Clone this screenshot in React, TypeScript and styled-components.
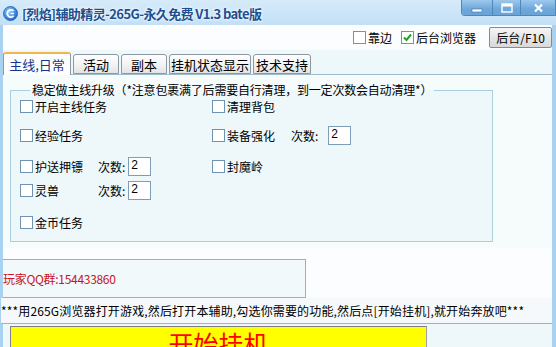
import React from 'react';
import styled, { createGlobalStyle } from 'styled-components';

const GlobalStyle = createGlobalStyle`
  html, body {
    margin: 0;
    padding: 0;
    background: #ffffff;
  }
  body {
    font-family: "Noto Sans CJK SC", "Noto Sans", sans-serif;
    font-size: 12px;
    color: #000;
  }
`;

// Ventana
const Window = styled.div`
  width: 556px;
  height: 347px;
  overflow: hidden;
  display: flex;
  flex-direction: column;
  background: #c4e0f6;
`;

const TitleBar = styled.div`
  height: 25px;
  flex-shrink: 0;
  display: flex;
  align-items: flex-start;
  background: linear-gradient(to bottom, #d6ebfa 0%, #c2dff5 100%);
`;

const TitleText = styled.div`
  display: flex;
  align-items: center;
  gap: 4px;
  height: 26px;
  padding-left: 3px;
  font-size: 13px;
  font-weight: bold;
  color: #1d4f8f;
  text-shadow: 0 0 4px #ffffff, 0 0 2px #ffffff;
  letter-spacing: -0.6px;
`;

const WinButtons = styled.div`
  margin-left: auto;
  display: flex;
  height: 15px;
  border: 1px solid #4f86bd;
  border-top: none;
  border-radius: 0 0 0 4px;
  overflow: hidden;
`;

const WinButton = styled.div<{ w: number }>`
  width: ${p => p.w}px;
  display: flex;
  align-items: center;
  justify-content: center;
  background: linear-gradient(to bottom, #9cc8ec 0%, #6fa7da 60%, #6aa3d8 100%);
  & + & {
    border-left: 1px solid #4f86bd;
  }
`;

const Client = styled.div`
  flex: 1;
  display: flex;
  flex-direction: column;
  border-left: 3px solid #a9d2f1;
  border-right: 4px solid #a9d2f1;
  background: #fbfdfe;
  min-height: 0;
`;

// Barra superior
const TopBar = styled.div`
  height: 25px;
  flex-shrink: 0;
  display: flex;
  align-items: center;
  justify-content: flex-end;
  background: #fbfdfe;
`;

const Option = styled.label<{ ml?: number }>`
  display: flex;
  align-items: center;
  gap: 2px;
  margin-left: ${p => p.ml ?? 0}px;
  line-height: 14px;
  white-space: nowrap;
`;

const Box = styled.span`
  width: 11px;
  height: 11px;
  border: 1px solid #6f93b3;
  background: #ffffff;
  display: inline-flex;
  align-items: center;
  justify-content: center;
  flex-shrink: 0;
`;

const PushButton = styled.div`
  margin-left: 13px;
  width: 61px;
  height: 19px;
  display: flex;
  align-items: center;
  justify-content: center;
  border: 1px solid #8a8a8a;
  border-radius: 2px;
  background: linear-gradient(to bottom, #f6f6f6 0%, #e6e6e6 50%, #d9d9d9 100%);
  font-size: 12px;
  white-space: nowrap;
`;

// Pestañas
const TabStrip = styled.div`
  height: 24px;
  flex-shrink: 0;
  display: flex;
  align-items: flex-end;
  background: #eef8fa;
  border-bottom: 1px solid #9fbccc;
  gap: 2px;
`;

const Tab = styled.div<{ active?: boolean; w: number }>`
  width: ${p => p.w}px;
  height: ${p => (p.active ? 23 : 20)}px;
  box-sizing: border-box;
  display: flex;
  align-items: center;
  justify-content: center;
  margin-bottom: ${p => (p.active ? -1 : 0)}px;
  border: 1px solid #8d98a3;
  border-bottom: ${p => (p.active ? 'none' : '1px solid #8d98a3')};
  border-top: ${p => (p.active ? '2px solid #f0b64a' : '1px solid #8d98a3')};
  border-radius: 3px 3px 0 0;
  background: ${p =>
    p.active ? '#fbfdfe' : 'linear-gradient(to bottom, #ffffff 0%, #f1f1f1 60%, #e4e4e4 100%)'};
  color: ${p => (p.active ? '#17328c' : '#000')};
  font-size: 13px;
  white-space: nowrap;
`;

const Panel = styled.div`
  height: 173px;
  flex-shrink: 0;
  background: #f6fbfc;
  padding: 8px 0 0 7px;
  box-sizing: border-box;
`;

const GroupBox = styled.fieldset`
  width: 483px;
  box-sizing: border-box;
  margin: 0;
  padding: 0 0 0 9px;
  border: 1px solid #a7cfdd;
  background: #eef8fa;
`;

const Legend = styled.legend`
  margin-left: 10px;
  padding: 0 2px;
  line-height: 14px;
  font-size: 12px;
  letter-spacing: -0.2px;
  white-space: nowrap;
`;

const Row = styled.div<{ h: number }>`
  height: ${p => p.h}px;
  display: grid;
  grid-template-columns: 192px 1fr;
  align-items: center;
`;

const Cell = styled.div`
  display: flex;
  align-items: center;
`;

const CheckItem = styled.label<{ w?: number }>`
  display: flex;
  align-items: center;
  gap: 2px;
  width: ${p => (p.w ? `${p.w}px` : 'auto')};
  font-size: 12px;
  white-space: nowrap;
`;

const CountText = styled.span`
  font-size: 12px;
  white-space: nowrap;
`;

const CountInput = styled.div<{ ml: number }>`
  margin-left: ${p => p.ml}px;
  width: 19px;
  height: 17px;
  border: 1px solid #7f9db9;
  background: #ffffff;
  font-family: "Liberation Sans", sans-serif;
  font-size: 12px;
  line-height: 14px;
  padding-left: 2px;
`;

// Parte inferior
const QQBox = styled.div`
  margin-top: 11px;
  width: 303px;
  height: 39px;
  box-sizing: border-box;
  border: 1px solid #a3adb6;
  border-left: none;
  background: #f2f9fb;
  display: flex;
  align-items: center;
  color: #c8141e;
  font-size: 12px;
  letter-spacing: -0.3px;
  flex-shrink: 0;
`;

const Notice = styled.div`
  height: 25px;
  flex-shrink: 0;
  display: flex;
  align-items: center;
  background: #f6f9fb;
  border-bottom: 1px solid #a9b1b8;
  font-size: 12px;
  white-space: nowrap;
  letter-spacing: 0.15px;
  margin-left: -2px;
`;

const BottomArea = styled.div`
  flex: 1;
  display: flex;
  background: #eef7fa;
  padding: 2px 0 0 7px;
`;

const StartButton = styled.div`
  width: 415px;
  height: 40px;
  background: #ffff00;
  border-top: 1px solid #808080;
  border-left: 1px solid #808080;
  border-right: 1px solid #a0a0a0;
  display: flex;
  justify-content: center;
  padding-top: 1px;
  color: #ff0000;
  font-size: 25px;
  line-height: 30px;
`;

const CheckBox: React.FC<{ checked?: boolean }> = ({ checked }) => (
  <Box>
    {checked && (
      <svg width="9" height="9" viewBox="0 0 9 9">
        <path d="M1 4.5 L3.5 7 L8 1.5" fill="none" stroke="#23a223" strokeWidth="2" />
      </svg>
    )}
  </Box>
);

const AppIcon: React.FC = () => (
  <svg width="15" height="15" viewBox="0 0 15 15">
    <defs>
      <radialGradient id="ig" cx="0.4" cy="0.35" r="0.7">
        <stop offset="0" stopColor="#8fd0ff" />
        <stop offset="1" stopColor="#1b63c6" />
      </radialGradient>
    </defs>
    <circle cx="7.5" cy="7.5" r="7" fill="url(#ig)" stroke="#1c5aa8" strokeWidth="0.8" />
    <path d="M10.5 5 A3.6 3.6 0 1 0 10.6 9.8" fill="none" stroke="#ffffff" strokeWidth="1.8" />
    <path d="M7.5 7.5 H11" stroke="#ffffff" strokeWidth="1.4" />
  </svg>
);

const App: React.FC = () => {
  const tabs = [
    { label: '主线,日常', w: 68, active: true },
    { label: '活动', w: 46 },
    { label: '副本', w: 46 },
    { label: '挂机状态显示', w: 82 },
    { label: '技术支持', w: 58 },
  ];

  return (
    <>
      <GlobalStyle />
      <Window>
        <TitleBar>
          <TitleText>
            <AppIcon />
            [烈焰]辅助精灵-265G-永久免费 V1.3 bate版
          </TitleText>
          <WinButtons>
            <WinButton w={30}>
              <svg width="12" height="10" viewBox="0 0 12 10">
                <rect x="1" y="6" width="10" height="3" fill="#ffffff" stroke="#3e6fa3" strokeWidth="0.6" />
              </svg>
            </WinButton>
            <WinButton w={27}>
              <svg width="12" height="10" viewBox="0 0 12 10">
                <rect x="1" y="1" width="10" height="8" fill="none" stroke="#ffffff" strokeWidth="1.4" />
                <rect x="1" y="1" width="10" height="2.5" fill="#ffffff" />
              </svg>
            </WinButton>
            <WinButton w={34}>
              <svg width="11" height="10" viewBox="0 0 11 10">
                <path d="M2 1.5 L9 8.5 M9 1.5 L2 8.5" stroke="#ffffff" strokeWidth="2.2" />
              </svg>
            </WinButton>
          </WinButtons>
        </TitleBar>

        <Client>
          <TopBar>
            <Option>
              <CheckBox />
              靠边
            </Option>
            <Option ml={9}>
              <CheckBox checked />
              后台浏览器
            </Option>
            <PushButton>后台/F10</PushButton>
          </TopBar>

          <TabStrip>
            {tabs.map(t => (
              <Tab key={t.label} active={t.active} w={t.w}>
                {t.label}
              </Tab>
            ))}
          </TabStrip>

          <Panel>
            <GroupBox>
              <Legend>稳定做主线升级（*注意包裹满了后需要自行清理，到一定次数会自动清理*）</Legend>
              <Row h={18}>
                <Cell>
                  <CheckItem>
                    <CheckBox />
                    开启主线任务
                  </CheckItem>
                </Cell>
                <Cell>
                  <CheckItem>
                    <CheckBox />
                    清理背包
                  </CheckItem>
                </Cell>
              </Row>
              <Row h={40}>
                <Cell>
                  <CheckItem>
                    <CheckBox />
                    经验任务
                  </CheckItem>
                </Cell>
                <Cell>
                  <CheckItem w={79}>
                    <CheckBox />
                    装备强化
                  </CheckItem>
                  <CountText>次数:</CountText>
                  <CountInput ml={10}>2</CountInput>
                </Cell>
              </Row>
              <Row h={22}>
                <Cell>
                  <CheckItem w={78}>
                    <CheckBox />
                    护送押镖
                  </CheckItem>
                  <CountText>次数:</CountText>
                  <CountInput ml={3}>2</CountInput>
                </Cell>
                <Cell>
                  <CheckItem>
                    <CheckBox />
                    封魔岭
                  </CheckItem>
                </Cell>
              </Row>
              <Row h={26}>
                <Cell>
                  <CheckItem w={78}>
                    <CheckBox />
                    灵兽
                  </CheckItem>
                  <CountText>次数:</CountText>
                  <CountInput ml={3}>2</CountInput>
                </Cell>
                <Cell />
              </Row>
              <Row h={38}>
                <Cell>
                  <CheckItem>
                    <CheckBox />
                    金币任务
                  </CheckItem>
                </Cell>
                <Cell />
              </Row>
            </GroupBox>
          </Panel>

          <QQBox>玩家QQ群:154433860</QQBox>

          <Notice>***用265G浏览器打开游戏,然后打开本辅助,勾选你需要的功能,然后点[开始挂机],就开始奔放吧***</Notice>

          <BottomArea>
            <StartButton>开始挂机</StartButton>
          </BottomArea>
        </Client>
      </Window>
    </>
  );
};

export default App;
